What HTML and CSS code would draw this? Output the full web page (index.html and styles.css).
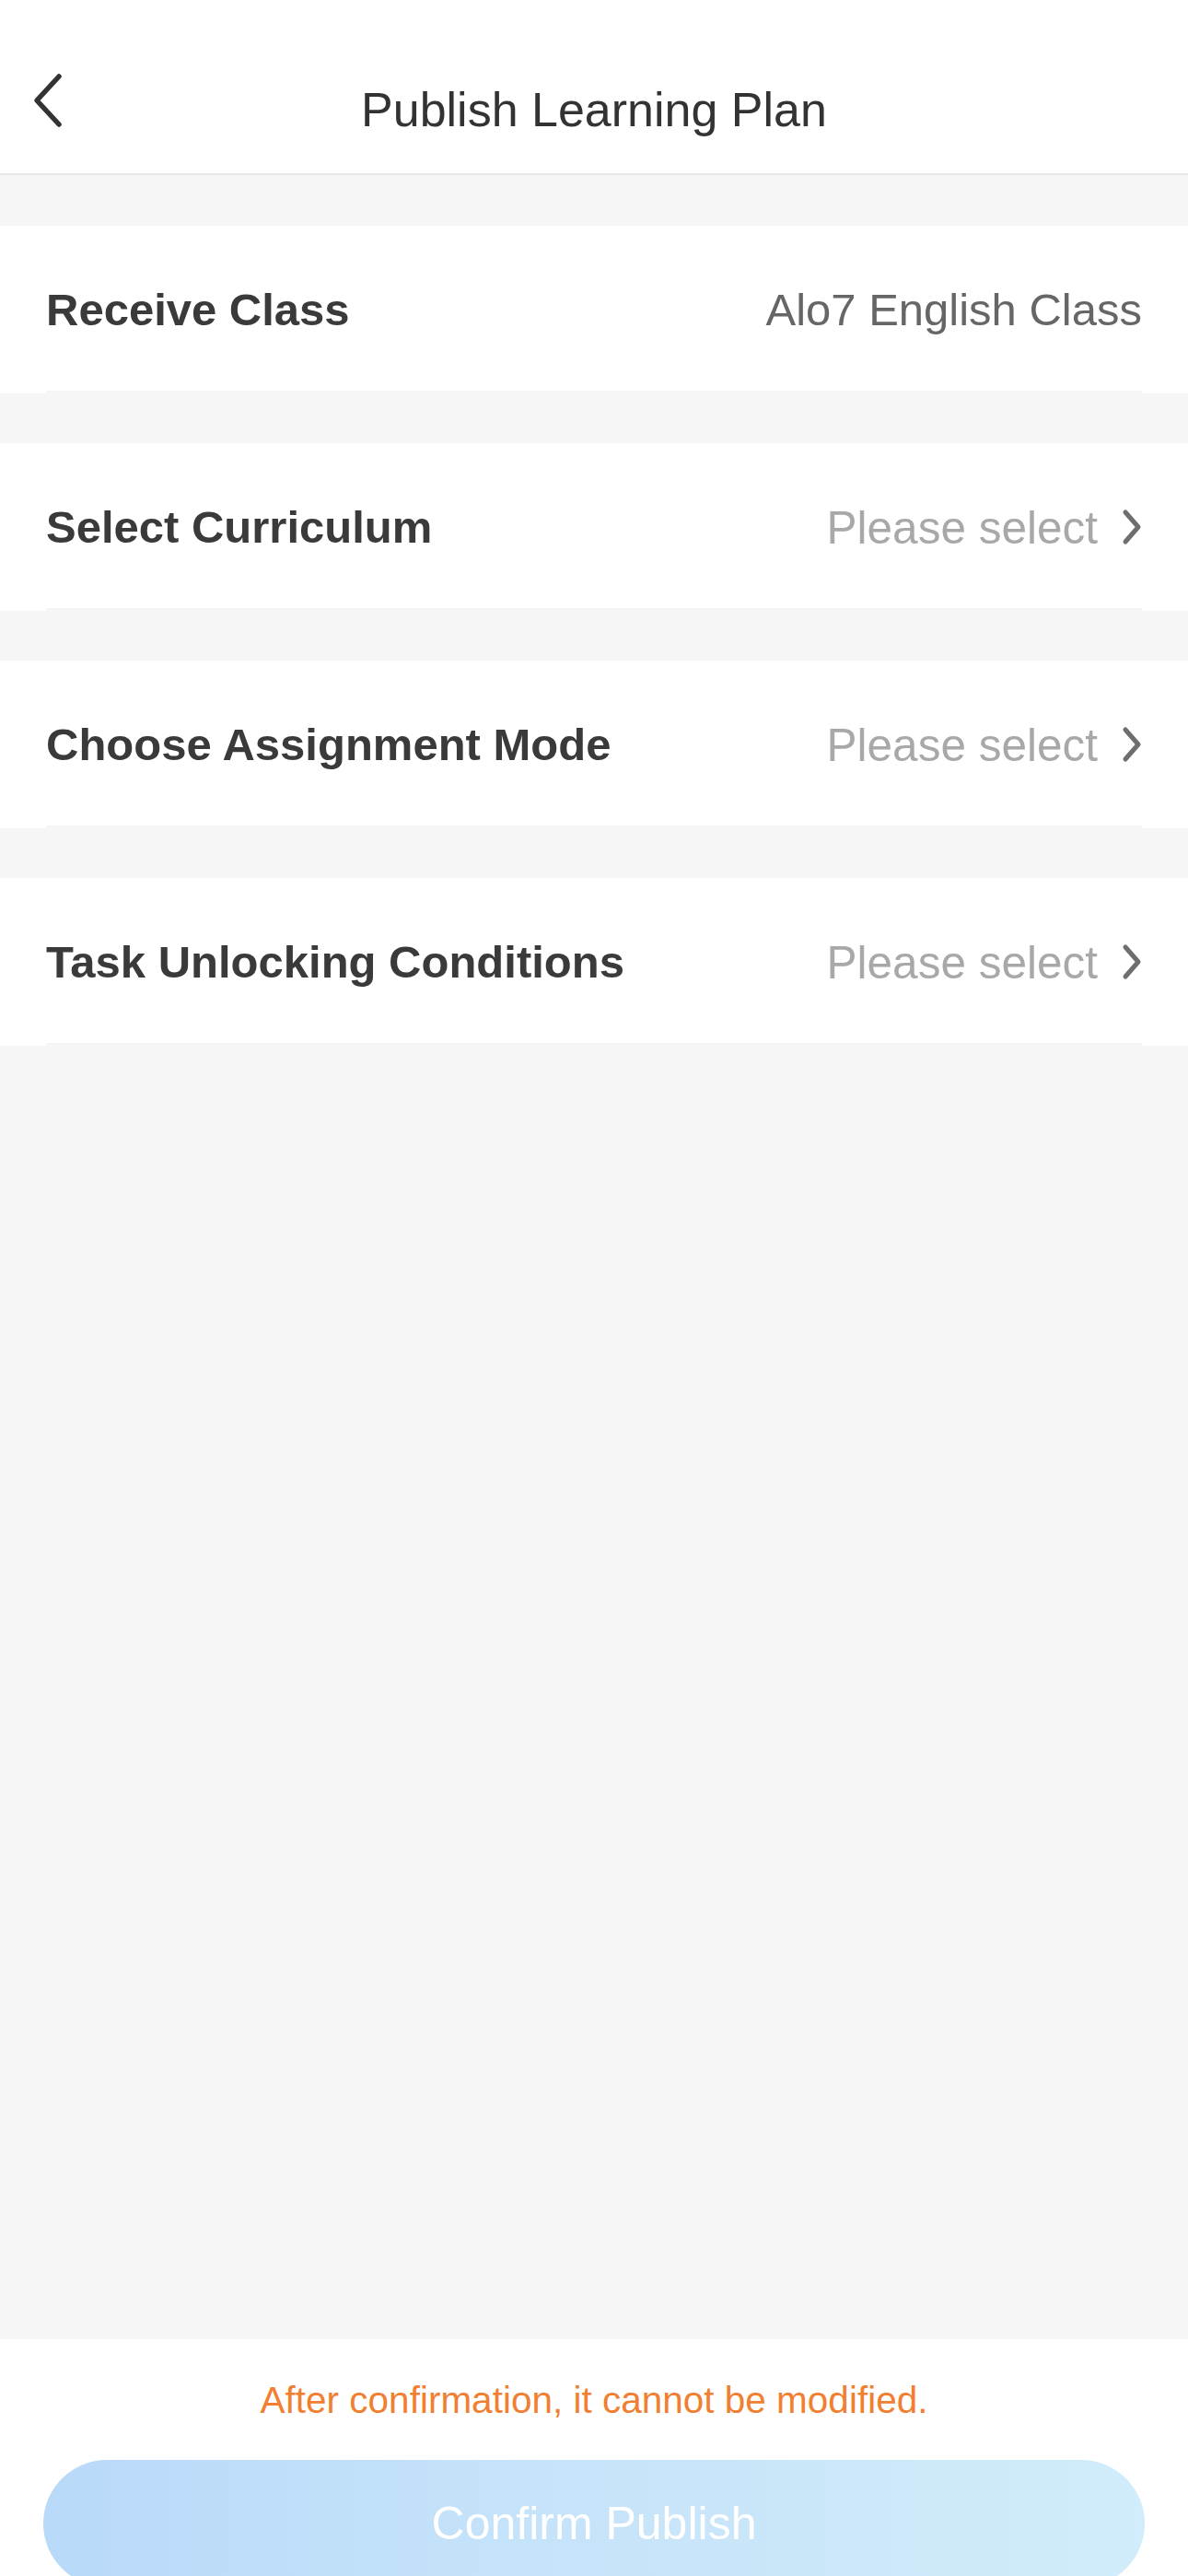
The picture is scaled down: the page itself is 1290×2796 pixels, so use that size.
FILE: index.html
```html
<!DOCTYPE html>
<html>
<head>
<meta charset="utf-8">
<link rel="stylesheet" href="styles.css">
</head>
<body>
<div class="page">
  <header class="header">
    <div class="nav">
      <div class="nav-left">
        <svg class="back" width="34" height="60" viewBox="0 0 34 60"><path d="M30 4 L6 30 L30 56" fill="none" stroke="#333" stroke-width="5.5" stroke-linecap="round" stroke-linejoin="round"/></svg>
      </div>
      <div class="title">Publish Learning Plan</div>
      <div class="nav-right"></div>
    </div>
  </header>
  <main class="main">
    <div class="row">
      <div class="row-inner">
        <span class="label">Receive Class</span>
        <span class="value">Alo7 English Class</span>
      </div>
    </div>
    <div class="row">
      <div class="row-inner">
        <span class="label">Select Curriculum</span>
        <span class="value-wrap"><span class="placeholder">Please select</span><svg class="chev" width="22" height="40" viewBox="0 0 22 40"><path d="M4 4 L18 20 L4 36" fill="none" stroke="#6e6e6e" stroke-width="5" stroke-linecap="round" stroke-linejoin="round"/></svg></span>
      </div>
    </div>
    <div class="row">
      <div class="row-inner">
        <span class="label">Choose Assignment Mode</span>
        <span class="value-wrap"><span class="placeholder">Please select</span><svg class="chev" width="22" height="40" viewBox="0 0 22 40"><path d="M4 4 L18 20 L4 36" fill="none" stroke="#6e6e6e" stroke-width="5" stroke-linecap="round" stroke-linejoin="round"/></svg></span>
      </div>
    </div>
    <div class="row">
      <div class="row-inner">
        <span class="label">Task Unlocking Conditions</span>
        <span class="value-wrap"><span class="placeholder">Please select</span><svg class="chev" width="22" height="40" viewBox="0 0 22 40"><path d="M4 4 L18 20 L4 36" fill="none" stroke="#6e6e6e" stroke-width="5" stroke-linecap="round" stroke-linejoin="round"/></svg></span>
      </div>
    </div>
  </main>
  <footer class="footer">
    <div class="warning">After confirmation, it cannot be modified.</div>
    <button class="confirm">Confirm Publish</button>
  </footer>
</div>
</body>
</html>
```

FILE: styles.css
```css
* { box-sizing: border-box; }
html, body { margin: 0; padding: 0; }
body {
  font-family: "Liberation Sans", Arial, sans-serif;
  background: #f6f6f6;
}
.page {
  width: 1290px;
  height: 2796px;
  display: flex;
  flex-direction: column;
  overflow: hidden;
  background: #f6f6f6;
}
.header {
  flex-shrink: 0;
  background: #fff;
  padding-top: 50px;
  border-bottom: 2px solid #e6e6e6;
}
.nav {
  height: 138px;
  display: grid;
  grid-template-columns: 1fr auto 1fr;
  align-items: center;
}
.nav-left {
  display: flex;
  align-items: center;
  padding-left: 34px;
  margin-bottom: 20px;
}
.back { display: block; }
.title {
  font-size: 52px;
  color: #333;
  line-height: 60px;
}
.main {
  flex: 1;
  padding-top: 55px;
  display: flex;
  flex-direction: column;
  gap: 54px;
}
.row {
  background: #fff;
  padding: 0 50px;
}
.row-inner {
  height: 182px;
  display: flex;
  align-items: center;
  justify-content: space-between;
  border-bottom: 3px solid #f5f5f5;
  padding-top: 3px;
}
.label {
  font-size: 49px;
  font-weight: 700;
  color: #3a3a3a;
}
.value {
  font-size: 49px;
  color: #666;
}
.value-wrap {
  display: flex;
  align-items: center;
  gap: 26px;
}
.placeholder {
  font-size: 49.5px;
  color: #a8a8a8;
}
.chev { display: block; }
.footer {
  flex-shrink: 0;
  height: 257px;
  background: #fff;
  padding: 42px 47px 0;
  display: flex;
  flex-direction: column;
  align-items: stretch;
}
.warning {
  text-align: center;
  font-size: 40.5px;
  line-height: 48px;
  color: #f07f31;
}
.confirm {
  flex-shrink: 0;
  margin-top: 41px;
  height: 138px;
  width: 100%;
  border: none;
  border-radius: 69px;
  background: linear-gradient(90deg, #b9d9f9 0%, #c4e2f9 40%, #d1ecfa 100%);
  color: #fff;
  font-family: "Liberation Sans", Arial, sans-serif;
  font-size: 50px;
  padding: 0;
}
```
